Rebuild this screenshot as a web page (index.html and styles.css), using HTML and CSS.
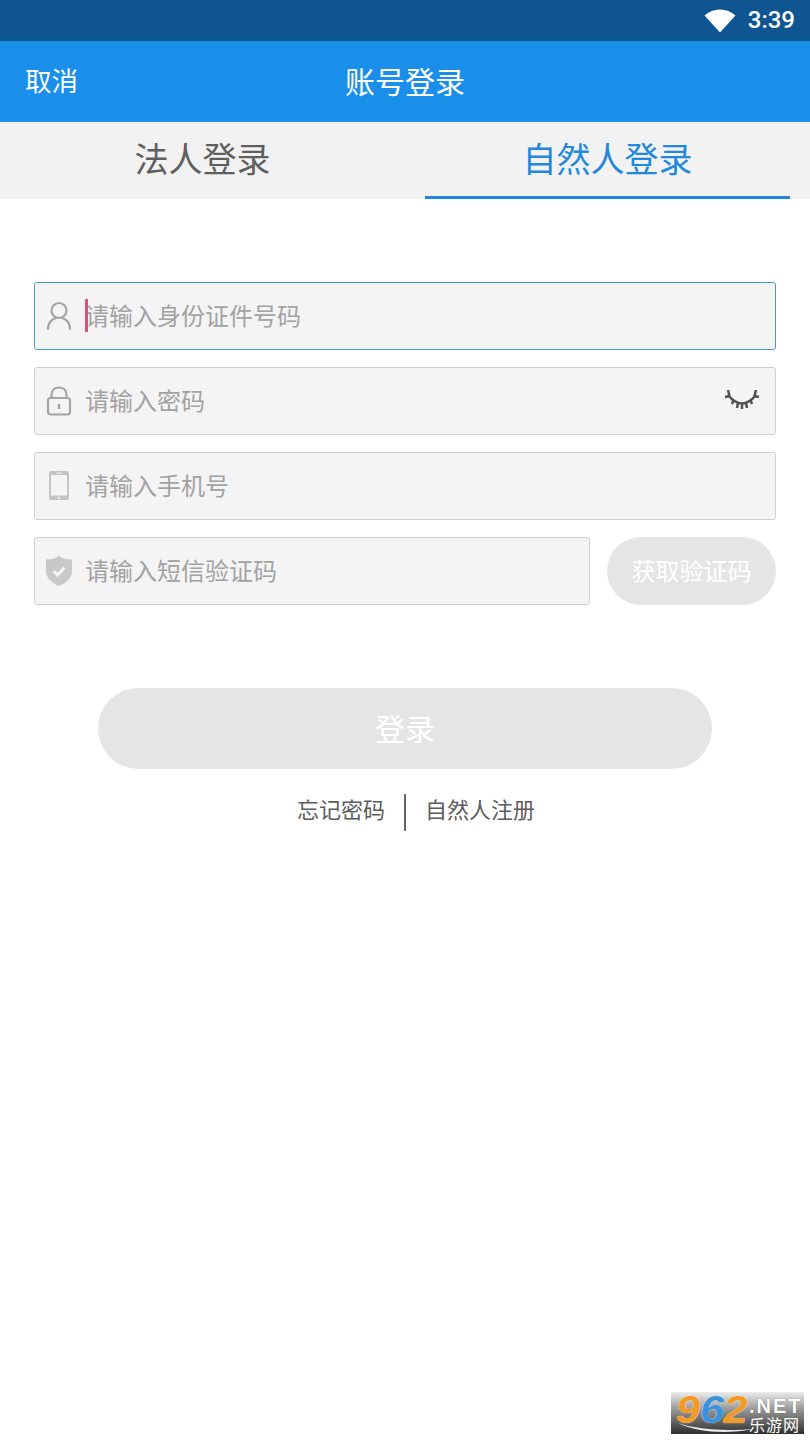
FILE: index.html
```html
<!DOCTYPE html>
<html lang="zh-CN">
<head>
<meta charset="utf-8">
<title>账号登录</title>
<link rel="stylesheet" href="styles.css">
</head>
<body>
<div class="page">
  <div class="status">
    <svg class="wifi" width="32" height="24" viewBox="0 0 32 24"><path d="M0.5 6.5 C9 -1.5 23 -1.5 31.5 6.5 L16 23.5 Z" fill="#fff"/></svg>
    <span class="clock">3:39</span>
  </div>
  <header class="appbar">
    <span class="cancel">取消</span>
    <span class="title">账号登录</span>
  </header>
  <nav class="tabs">
    <div class="tab">法人登录</div>
    <div class="tab active">自然人登录</div>
  </nav>
  <main class="form">
    <div class="field focus">
      <svg class="ico" width="26" height="30" viewBox="0 0 26 30"><g fill="none" stroke="#a4a4a4" stroke-width="2.200"><circle cx="13" cy="9.500" r="7.500"/><path d="M2 28 C2 21 7 17.500 10 17 M24 28 C24 21 19 17.500 16 17" stroke-linecap="round"/></g></svg>
      <span class="caret"></span>
      <span class="ph">请输入身份证件号码</span>
    </div>
    <div class="field">
      <svg class="ico" width="26" height="30" viewBox="0 0 26 30"><g fill="none" stroke="#a4a4a4" stroke-width="2.200"><rect x="2" y="12" width="22" height="16.500" rx="2.500"/><path d="M5.500 12 V9 C5.500 4 9 1.500 13 1.500 C17 1.500 20.500 4 20.500 9 V12"/></g><rect x="11.800" y="18" width="2.400" height="5" fill="#a4a4a4"/></svg>
      <span class="ph">请输入密码</span>
      <svg class="eye" width="36" height="20" viewBox="0 0 36 20"><g fill="none" stroke="#505050" stroke-width="2.500"><path d="M4 5 C9 11 13 13.500 18 13.500 C23 13.500 27 11 32 5"/><path d="M4 0 L5.500 6 M1 7 L6 6 M9.500 10 L8 14 M14 13 L13 18 M18 14 V19 M22 13 L23 18 M26.500 10 L28 14 M32 0 L30.500 6 M35 7 L30 6"/></g></svg>
    </div>
    <div class="field">
      <svg class="ico" width="26" height="30" viewBox="0 0 26 30"><rect x="3" y="0" width="20" height="29" rx="2" fill="#c4c4c4"/><rect x="5" y="4" width="16" height="20.500" fill="#f4f4f4"/><rect x="10.500" y="1.500" width="5" height="1" fill="#f4f4f4"/><circle cx="13" cy="26.700" r="1.200" fill="#f4f4f4"/></svg>
      <span class="ph">请输入手机号</span>
    </div>
    <div class="code-row">
      <div class="field grow">
        <svg class="ico" width="26" height="30" viewBox="0 0 26 30"><path d="M13 0 C16 2.500 20 3.500 26 3.500 V15 C26 22 20 27 13 30 C6 27 0 22 0 15 V3.500 C6 3.500 10 2.500 13 0 Z" fill="#c8c8c8"/><path d="M7.500 15 L11.500 19 L18.500 11.500" fill="none" stroke="#f4f4f4" stroke-width="3"/></svg>
        <span class="ph">请输入短信验证码</span>
      </div>
      <div class="code-btn"><span class="btn-text">获取验证码</span></div>
    </div>
    <div class="login"><span class="btn-text">登录</span></div>
    <div class="links">
      <span class="link left">忘记密码</span>
      <span class="sep"></span>
      <span class="link">自然人注册</span>
    </div>
  </main>
  <div class="mark">
    <svg class="swoosh" width="76" height="12" viewBox="0 0 76 12"><path d="M0 1 C20 8 50 9 76 7 C50 12 20 11 0 1 Z" fill="#e8e8e8"/></svg>
    <div class="mark-num"><span class="o">9</span><span class="b">6</span><span class="o">2</span></div>
    <div class="mark-side"><span class="net">.NET</span><span class="cn">乐游网</span></div>
  </div>
</div>
</body>
</html>
```
FILE: styles.css
```css
* { box-sizing: border-box; }
html, body { margin: 0; padding: 0; background: #fff; }
body { font-family: "Roboto", "Noto Sans CJK SC", sans-serif; }
.page { position: relative; width: 810px; height: 1440px; overflow: hidden; background: #fff; }

.status { height: 41px; background: #0e5591; display: flex; align-items: center; justify-content: flex-end; padding-right: 15px; }
.wifi { margin-right: 12px; }
.clock { color: #fff; font-size: 24px; font-weight: 500; font-family: "Roboto", sans-serif; line-height: 41px; }

.appbar { height: 81px; background: #1a8fe9; position: relative; display: flex; align-items: center; justify-content: center; color: #fff; }
.cancel { position: absolute; left: 25px; top: 50%; transform: translateY(-52%); margin-top: -2px; font-size: 26.500px; }
.title { font-size: 30px; padding-bottom: 4px; }

.tabs { height: 77px; background: #f2f2f2; display: grid; grid-template-columns: 405px 405px; grid-template-rows: 77px; }
.tab { text-align: center; font-size: 34px; line-height: 76px; color: #5f5f5f; }
.tab.active { margin: 0 20px; color: #2288dc; border-bottom: 3px solid #2288dc; }

.form { padding: 83px 34px 0; display: flex; flex-direction: column; }
.field { height: 68px; background: #f4f4f4; border: 1px solid #cfcfcf; border-radius: 3px; display: flex; align-items: center; padding-left: 11px; margin-bottom: 17px; position: relative; }
.field.focus { border-color: #4b9ac8; }
.ico { flex: none; margin-right: 13px; }
.ph { font-size: 24px; color: #a2a2a2; padding-bottom: 4px; }
.caret { position: absolute; left: 50px; top: 16px; width: 3px; height: 33px; background: #d9527f; }
.eye { margin-left: auto; margin-right: 15px; margin-top: -2px; }

.code-row { display: flex; justify-content: space-between; }
.field.grow { width: 556px; margin-bottom: 0; }
.code-btn { width: 169px; height: 68px; border-radius: 34px; background: #e5e5e5; color: #fff; font-size: 24px; display: flex; align-items: center; justify-content: center; }
.btn-text { padding-bottom: 4px; }

.login { width: 614px; height: 81px; margin: 83px auto 0; border-radius: 41px; background: #e5e5e5; color: #fff; font-size: 30px; display: flex; align-items: center; justify-content: center; }

.links { display: grid; grid-template-columns: 1fr 2px 1fr; align-items: center; column-gap: 19px; margin-top: 25px; height: 37px; color: #5c5c5c; font-size: 22px; }
.sep { width: 2px; height: 37px; background: #666; }
.link { line-height: 33px; padding-bottom: 4px; }
.link.left { text-align: right; }

.mark { position: absolute; left: 671px; top: 1392px; width: 133px; height: 42px; background: linear-gradient(#ececec, #9a9a9a 40%, #2e2e2e); }
.swoosh { position: absolute; left: 7px; top: 30px; }
.mark-num { position: absolute; left: 5px; top: 0; font-family: "Liberation Sans", sans-serif; font-weight: 700; font-style: italic; font-size: 38px; line-height: 36px; transform: scaleX(1.13); transform-origin: left top; text-shadow: 0 0 1px #fff; }
.o { color: #f39a26; }
.b { color: #3a92dc; }
.mark-side { position: absolute; left: 78px; top: 4px; display: flex; flex-direction: column; color: #fff; line-height: 1; }
.net { font-family: "Liberation Sans", sans-serif; font-weight: 700; font-size: 20px; letter-spacing: 2px; line-height: 20px; text-shadow: 0 0 1px #555; }
.cn { font-size: 16px; letter-spacing: 1px; line-height: 16px; margin-top: 2px; }
```
